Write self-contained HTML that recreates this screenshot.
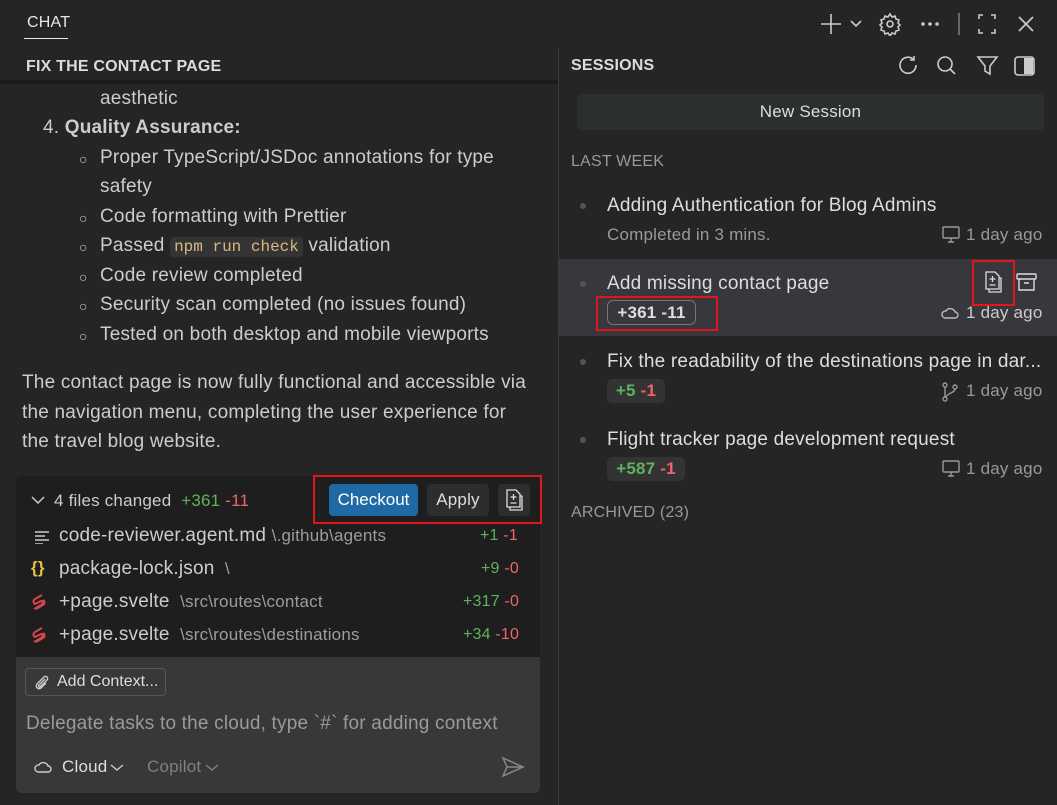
<!DOCTYPE html>
<html><head><meta charset="utf-8"><style>
*{margin:0;padding:0;box-sizing:border-box}
body{width:1057px;height:805px;background:#252526;color:#cccccc;font-family:"Liberation Sans",sans-serif;font-size:19px;letter-spacing:0.2px;position:relative;overflow:hidden}
.a{position:absolute;white-space:nowrap}
.g{color:#5fb35f}.r{color:#f0646a}
.dim{color:#9d9d9d}
svg{position:absolute}
.bl{font-size:14px}
</style></head><body>
<!-- top bar -->
<div class="a" style="left:27px;top:14px;font-size:16px;color:#e7e7e7">CHAT</div>
<div class="a" style="left:24px;top:38px;width:44px;height:1px;background:#e7e7e7"></div>
<svg style="left:820px;top:12px" width="220" height="24" fill="none" stroke="#cccccc" stroke-width="1.6">
<path d="M11 2v20M1 12h20"/><path d="M31 9l5 5 5-5"/>
<circle cx="70" cy="12" r="3"/><path d="M70 2l2 3 3-1 1 3 3 1-1 3 2 2-2 2 1 3-3 1-1 3-3-1-2 3-2-3-3 1-1-3-3-1 1-3-2-2 2-2-1-3 3-1 1-3 3 1z"/>
<circle cx="103" cy="12" r="1" fill="#ccc"/><circle cx="110" cy="12" r="1" fill="#ccc"/><circle cx="117" cy="12" r="1" fill="#ccc"/>
<path d="M139 1v22" stroke="#777"/>
<path d="M159 7V3h4M171 3h4v4M175 17v4h-4M163 21h-4v-4"/>
<path d="M199 5l14 14M213 5l-14 14"/>
</svg>
<!-- left header -->
<div class="a" style="left:26px;top:58px;font-size:16px;font-weight:bold;color:#dcdcdc">FIX THE CONTACT PAGE</div>
<div class="a" style="left:0;top:80px;width:558px;height:4px;background:#1c1c1c"></div>
<div class="a" style="left:100px;top:88px">aesthetic</div>
<div class="a" style="left:43px;top:117px">4. <b>Quality Assurance:</b></div>
<div class="a bl" style="left:79px;top:151px">○</div><div class="a" style="left:100px;top:147px">Proper TypeScript/JSDoc annotations for type</div>
<div class="a" style="left:100px;top:176px">safety</div>
<div class="a bl" style="left:79px;top:210px">○</div><div class="a" style="left:100px;top:206px">Code formatting with Prettier</div>
<div class="a bl" style="left:79px;top:239px">○</div><div class="a" style="left:100px;top:235px">Passed <span style="background:#343434;border-radius:4px;padding:1px 4px;font-family:'Liberation Mono',monospace;font-size:16px;letter-spacing:0;color:#d7ba7d">npm run check</span> validation</div>
<div class="a bl" style="left:79px;top:269px">○</div><div class="a" style="left:100px;top:265px">Code review completed</div>
<div class="a bl" style="left:79px;top:298px">○</div><div class="a" style="left:100px;top:294px">Security scan completed (no issues found)</div>
<div class="a bl" style="left:79px;top:328px">○</div><div class="a" style="left:100px;top:324px">Tested on both desktop and mobile viewports</div>
<div class="a" style="left:22px;top:372px">The contact page is now fully functional and accessible via</div>
<div class="a" style="left:22px;top:402px">the navigation menu, completing the user experience for</div>
<div class="a" style="left:22px;top:431px">the travel blog website.</div>
<!-- files box -->
<div class="a" style="left:16px;top:476px;width:524px;height:182px;background:#1e1e1e;border-radius:6px 6px 0 0"></div>
<svg style="left:31px;top:494px" width="14" height="12" fill="none" stroke="#ccc" stroke-width="1.5"><path d="M1 3l6 6 6-6"/></svg>
<div class="a" style="left:54px;top:491px;font-size:17px">4 files changed <span class="g">&nbsp;+361</span> <span class="r">-11</span></div>
<div class="a" style="left:329px;top:484px;width:89px;height:32px;background:#1f6aa5;border-radius:4px;color:#fff;font-size:17px;letter-spacing:0;text-align:center;line-height:32px">Checkout</div>
<div class="a" style="left:427px;top:484px;width:62px;height:32px;background:#2b2d2e;border-radius:4px;color:#ddd;font-size:17px;text-align:center;line-height:32px">Apply</div>
<div class="a" style="left:498px;top:484px;width:32px;height:32px;background:#2b2d2e;border-radius:4px"></div>
<svg style="left:504px;top:488px" width="22" height="24" fill="none" stroke="#ddd" stroke-width="1.3"><path d="M3 2h9l4 4v13H3z"/><path d="M16 8h2v14H6v-3"/><path d="M9.5 6v6M6.5 9h6M6.5 15h6"/></svg>
<div class="a" style="left:313px;top:475px;width:229px;height:49px;border:2px solid #e0161c"></div>
<svg style="left:35px;top:530px" width="14" height="14" stroke="#ccc" stroke-width="1.5"><path d="M0 2h14M0 6h10M0 10h14M0 14h8"/></svg>
<div class="a" style="left:59px;top:525px">code-reviewer.agent.md <span class="dim" style="font-size:17px">\.github\agents</span></div>
<div class="a" style="left:480px;top:527px;font-size:16px"><span class="g">+1</span> <span class="r">-1</span></div>
<div class="a" style="left:31px;top:558px;color:#e2c541;font-weight:bold;font-size:17px">{}</div>
<div class="a" style="left:59px;top:558px">package-lock.json <span class="dim" style="font-size:17px">&nbsp;\</span></div>
<div class="a" style="left:481px;top:560px;font-size:16px"><span class="g">+9</span> <span class="r">-0</span></div>
<svg style="left:31px;top:593px" width="16" height="18" fill="none" stroke="#d5454a" stroke-width="2"><path d="M11 2L4 6c-2 1-2 4 0 5l6-3c2-1 2 3 0 4l-7 4"/><path d="M5 16l7-4c2-1 2-4 0-5"/></svg>
<div class="a" style="left:59px;top:591px">+page.svelte <span class="dim" style="font-size:17px">&nbsp;\src\routes\contact</span></div>
<div class="a" style="left:463px;top:593px;font-size:16px"><span class="g">+317</span> <span class="r">-0</span></div>
<svg style="left:31px;top:626px" width="16" height="18" fill="none" stroke="#d5454a" stroke-width="2"><path d="M11 2L4 6c-2 1-2 4 0 5l6-3c2-1 2 3 0 4l-7 4"/><path d="M5 16l7-4c2-1 2-4 0-5"/></svg>
<div class="a" style="left:59px;top:624px">+page.svelte <span class="dim" style="font-size:17px">&nbsp;\src\routes\destinations</span></div>
<div class="a" style="left:463px;top:626px;font-size:16px"><span class="g">+34</span> <span class="r">-10</span></div>
<!-- input -->
<div class="a" style="left:16px;top:657px;width:524px;height:136px;background:#383838;border-radius:0 0 6px 6px"></div>
<div class="a" style="left:25px;top:668px;width:141px;height:28px;border:1px solid #555;border-radius:4px"></div>
<svg style="left:34px;top:674px" width="16" height="16" fill="none" stroke="#ccc" stroke-width="1.4"><path d="M11 5l-6 6c-1 1 0 3 1 2l7-7c2-2-1-5-3-3L3 10c-2 3 1 6 4 4l5-5"/></svg>
<div class="a" style="left:57px;top:673px;font-size:16px;letter-spacing:0;color:#ddd">Add Context...</div>
<div class="a" style="left:26px;top:713px;color:#9a9a9a">Delegate tasks to the cloud, type `#` for adding context</div>
<svg style="left:34px;top:759px" width="18" height="14" fill="none" stroke="#ccc" stroke-width="1.4"><path d="M4 13h10a3 3 0 0 0 0-6 5 5 0 0 0-9-1 3.5 3.5 0 0 0-1 7z"/></svg>
<div class="a" style="left:62px;top:757px;font-size:17px;color:#ddd">Cloud</div>
<svg style="left:110px;top:763px" width="14" height="10" fill="none" stroke="#ccc" stroke-width="1.4"><path d="M1 2l6 5 6-5"/></svg>
<div class="a" style="left:147px;top:757px;font-size:17px;color:#808080">Copilot</div>
<svg style="left:205px;top:763px" width="14" height="10" fill="none" stroke="#808080" stroke-width="1.4"><path d="M1 2l6 5 6-5"/></svg>
<svg style="left:501px;top:756px" width="24" height="22" fill="none" stroke="#888" stroke-width="1.5"><path d="M2 2l20 9-20 9 4-9zM6 11h16"/></svg>
<!-- divider -->
<div class="a" style="left:558px;top:48px;width:1px;height:757px;background:#3a3a3a"></div>
<!-- sessions -->
<div class="a" style="left:571px;top:57px;font-size:16px;font-weight:bold;color:#dcdcdc">SESSIONS</div>
<svg style="left:898px;top:55px" width="146" height="22" fill="none" stroke="#ccc" stroke-width="1.6">
<path d="M18 10a8 8 0 1 1-3-6"/><path d="M16 1v4h-4"/>
<circle cx="47" cy="9" r="7"/><path d="M52 14l5 5"/>
<path d="M80 2h19l-7 9v8l-5-3v-5z"/>
<rect x="117" y="2" width="19" height="18" rx="3"/><rect x="126" y="3" width="9" height="16" fill="#ccc" stroke="none"/>
</svg>
<div class="a" style="left:577px;top:94px;width:467px;height:36px;background:#2c2f30;border-radius:4px;text-align:center;line-height:36px;font-size:17px;color:#ddd">New Session</div>
<div class="a" style="left:571px;top:153px;font-size:16px;color:#999">LAST WEEK</div>
<div class="a" style="left:580px;top:203px;width:6px;height:6px;border-radius:3px;background:#555"></div>
<div class="a" style="left:607px;top:195px;color:#ddd">Adding Authentication for Blog Admins</div>
<div class="a" style="left:607px;top:225px;font-size:17px;color:#999">Completed in 3 mins.</div>
<svg style="left:941px;top:226px" width="20" height="18" fill="none" stroke="#999" stroke-width="1.4"><rect x="2" y="1" width="16" height="11" rx="1"/><path d="M7 16h6M10 12v4"/></svg>
<div class="a" style="left:966px;top:225px;font-size:17px;color:#999">1 day ago</div>
<div class="a" style="left:559px;top:259px;width:498px;height:77px;background:#37373d"></div>
<div class="a" style="left:580px;top:281px;width:6px;height:6px;border-radius:3px;background:#555"></div>
<div class="a" style="left:607px;top:273px;color:#ddd">Add missing contact page</div>
<div class="a" style="left:607px;top:300px;width:89px;height:25px;border:1px solid #777;border-radius:6px;text-align:center;line-height:23px;font-weight:bold;font-size:17px;color:#ddd">+361 -11</div>
<div class="a" style="left:596px;top:296px;width:122px;height:35px;border:2px solid #e0161c"></div>
<svg style="left:983px;top:270px" width="22" height="24" fill="none" stroke="#ddd" stroke-width="1.3"><path d="M3 2h9l4 4v13H3z"/><path d="M16 8h2v14H6v-3"/><path d="M9.5 6v6M6.5 9h6M6.5 15h6"/></svg>
<div class="a" style="left:972px;top:260px;width:43px;height:46px;border:2px solid #e0161c"></div>
<svg style="left:1016px;top:273px" width="22" height="20" fill="none" stroke="#ddd" stroke-width="1.4"><rect x="1" y="1" width="19" height="5" rx="1"/><path d="M3 6v11h15V6M8 10h5"/></svg>
<svg style="left:941px;top:305px" width="20" height="14" fill="none" stroke="#bbb" stroke-width="1.4"><path d="M4 13h10a3 3 0 0 0 0-6 5 5 0 0 0-9-1 3.5 3.5 0 0 0-1 7z"/></svg>
<div class="a" style="left:966px;top:303px;font-size:17px;color:#ccc">1 day ago</div>
<div class="a" style="left:580px;top:359px;width:6px;height:6px;border-radius:3px;background:#555"></div>
<div class="a" style="left:607px;top:351px;color:#ddd">Fix the readability of the destinations page in dar...</div>
<div class="a" style="left:607px;top:379px;width:58px;height:24px;background:#333;border-radius:5px;text-align:center;line-height:24px;font-weight:bold;font-size:17px"><span class="g">+5</span> <span class="r">-1</span></div>
<svg style="left:941px;top:382px" width="20" height="20" fill="none" stroke="#999" stroke-width="1.4"><circle cx="4" cy="3" r="2"/><circle cx="4" cy="17" r="2"/><circle cx="14" cy="5" r="2"/><path d="M4 5v10M14 7c0 4-8 4-9 8"/></svg>
<div class="a" style="left:966px;top:381px;font-size:17px;color:#999">1 day ago</div>
<div class="a" style="left:580px;top:437px;width:6px;height:6px;border-radius:3px;background:#555"></div>
<div class="a" style="left:607px;top:429px;color:#ddd">Flight tracker page development request</div>
<div class="a" style="left:607px;top:457px;width:78px;height:24px;background:#333;border-radius:5px;text-align:center;line-height:24px;font-weight:bold;font-size:17px"><span class="g">+587</span> <span class="r">-1</span></div>
<svg style="left:941px;top:460px" width="20" height="18" fill="none" stroke="#999" stroke-width="1.4"><rect x="2" y="1" width="16" height="11" rx="1"/><path d="M7 16h6M10 12v4"/></svg>
<div class="a" style="left:966px;top:459px;font-size:17px;color:#999">1 day ago</div>
<div class="a" style="left:571px;top:504px;font-size:16px;color:#999">ARCHIVED (23)</div>
</body></html>
